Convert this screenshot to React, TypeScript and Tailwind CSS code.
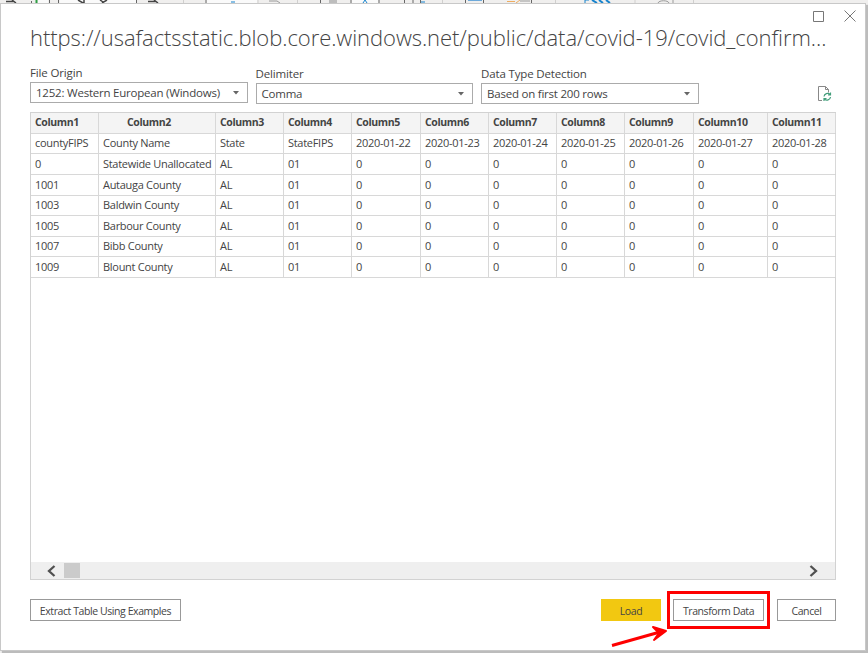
import React from "react";

const widths = ["w-[68px]", "w-[117px]", "w-[68px]", "w-[68px]", "w-[69px]", "w-[68px]", "w-[68px]", "w-[68px]", "w-[69px]", "w-[74px]", "w-[68px]"];
const headers = Array.from({ length: 11 }, (_, i) => `Column${i + 1}`);
const dates = ["2020-01-22", "2020-01-23", "2020-01-24", "2020-01-25", "2020-01-26", "2020-01-27", "2020-01-28"];
const zeros = ["0", "0", "0", "0", "0", "0", "0"];
const counties = [
  ["0", "Statewide Unallocated"],
  ["1001", "Autauga County"],
  ["1003", "Baldwin County"],
  ["1005", "Barbour County"],
  ["1007", "Bibb County"],
  ["1009", "Blount County"],
];
const rows = [
  ["countyFIPS", "County Name", "State", "StateFIPS", ...dates],
  ...counties.map((c) => [...c, "AL", "01", ...zeros]),
];
const heights = [
  "h-5 leading-[18px]",
  "h-[21px] leading-[20px]",
  "h-[21px] leading-[19px]",
  "h-5 leading-[18px]",
  "h-[21px] leading-[19px]",
  "h-5 leading-[18px]",
  "h-[21px] leading-[20px]",
];

function Select({ label, value, first }: { label: string; value: string; first?: boolean }) {
  return (
    <div className={first ? "w-[217.500px]" : "w-[217.500px] pt-px"}>
      <div className="-mt-px h-[17px] whitespace-nowrap text-[11.500px] leading-[18px] tracking-[-0.15px]">{label}</div>
      <div className="mt-px flex h-[21px] items-center justify-between border border-[#ababab] pl-[5px] pr-[8px] text-[11.500px] tracking-[-0.22px]">
        <span className="whitespace-nowrap">{value}</span>
        <svg className="shrink-0" width="6" height="4" viewBox="0 0 6 4"><path d="M0 0h6L3 3.5z" fill="#666" /></svg>
      </div>
    </div>
  );
}

function ToolbarEdge() {
  return (
    <svg className="block shrink-0" width="868" height="3" viewBox="0 0 868 3" fill="none">
      <path d="M38 0h10v3h-10zM60 0h76v3H60zM207 0h50v3h-50zM352 0h26v3h-26z" fill="#fafafa" />
      <path d="M6 1.500h8M12 0l4 3M148 1.500h8M154 0l4 3M78 0l5 3M84 0v3M107 0l-5 3M100 0l3 2" stroke="#444" strokeWidth="1.500" />
      <path d="M31.500 1v2M49.500 0v3M58.500 0v3M136.500 0v3M206 0v3M320.500 0v3M336.500 0v3M351 0v3M379 0v3M404.500 0v3M413 0v3M420.500 0v3M465.500 0v3M483.500 0v3M531.500 0v3" stroke="#666" />
      <path d="M329 0h8v3h-8z" fill="#bdbdbd" />
      <path d="M36.500 0v3" stroke="#2f9e44" strokeWidth="2" />
      <path d="M183.500 0v3M258 0v3M297.500 0v3M442.500 0v3M555.500 0v3M635 0v3M693.500 0v3" stroke="#d0cfce" />
      <path d="M269 1h8l3 2M520 1h10M658 3c1-3 10-3 11 0M673 0v3" stroke="#9a9a9a" />
      <path d="M363 3l2-3 2 3M231 2h4M421 2h4M585 3V0h4" stroke="#1683cd" />
      <path d="M592 0l5 3M599 0l4 3M606 0l4 3" stroke="#1683cd" strokeWidth="2" />
      <path d="M468 .5h14" stroke="#6da9da" />
      <path d="M507 1.500h8M520 0l-4 3" stroke="#efad61" />
    </svg>
  );
}

export default function App() {
  return (
    <div className="flex h-[653px] w-[868px] flex-col overflow-hidden bg-[#f0efee] font-['Open_Sans','Noto_Sans',sans-serif] text-[#444]">
      <ToolbarEdge />
      <div className="relative flex h-[648px] w-[866px] shrink-0 flex-col border border-[#c8c8c8] bg-white pl-[29px] shadow-[2px_2px_1px_#bcbcbc]">
        <div className="flex h-[18px] items-end justify-end gap-[19px] pr-[9px]">
          <svg width="12" height="12" viewBox="0 0 12 12" fill="none" stroke="#777"><path d="M.5 1.5h10v10H.5z" /></svg>
          <svg width="12" height="12" viewBox="0 0 12 12" fill="none" stroke="#777"><path d="M.5.5l11 11M11.5.5l-11 11" /></svg>
        </div>
        <h1 className="h-[43px] whitespace-nowrap text-[22px] font-light leading-[30px] tracking-[-0.06px]">https://usafactsstatic.blob.core.windows.net/public/data/covid-19/covid_confirm...</h1>
        <div className="flex h-[47px] gap-2">
          <Select first label="File Origin" value="1252: Western European (Windows)" />
          <Select label="Delimiter" value="Comma" />
          <Select label="Data Type Detection" value="Based on first 200 rows" />
          <svg className="ml-[110px] mt-[20px]" width="15" height="17" viewBox="0 0 15 17" fill="none">
            <path d="M5 15.500H1.500V1.500h7l3 3v3M8.500 1.500v3h3" stroke="#888" />
            <path d="M7 11.500a3.500 3.500 0 0 1 6-2M13.500 7.500v2.500H11M13.500 12a3.500 3.500 0 0 1-6 2M7 16v-2.500h2.500" stroke="#439e7b" strokeWidth="1.200" />
          </svg>
        </div>
        <div className="flex h-[468px] w-[806px] flex-col border border-[#d2d2d2]">
          <div className="flex h-[21px] shrink-0 border-b border-[#d8d8d8] bg-[#f4f4f4] text-[10.500px] font-bold leading-[19px] tracking-[-0.36px]">
            {headers.map((h, i) => (
              <div key={h} className={`${widths[i]} shrink-0 border-r border-[#d8d8d8] ${i === 1 ? "pl-7" : "pl-1"}`}>{h}</div>
            ))}
          </div>
          {rows.map((r, n) => (
            <div key={n} className={`${heights[n]} flex shrink-0 border-b border-[#d8d8d8] text-[11px] tracking-[-0.29px]`}>
              {r.map((v, i) => (
                <div key={i} className={`${widths[i]} shrink-0 whitespace-nowrap border-r border-[#d8d8d8] pl-1`}>{v}</div>
              ))}
            </div>
          ))}
          <div className="mt-auto flex h-[17px] items-center bg-[#efefef]">
            <svg className="ml-[15px]" width="10" height="12" viewBox="0 0 10 12" fill="none"><path d="M8.500 1L3 6l5.500 5" stroke="#505050" strokeWidth="2.300" /></svg>
            <div className="ml-2 h-[15px] w-4 bg-[#cbcbcb]" />
            <svg className="ml-auto mr-4" width="10" height="12" viewBox="0 0 10 12" fill="none"><path d="M1.500 1L7 6l-5.500 5" stroke="#505050" strokeWidth="2.300" /></svg>
          </div>
        </div>
        <div className="mt-[19px] flex h-[22px] w-[806px] whitespace-nowrap text-[10.500px] leading-[18px] tracking-[-0.42px] [word-spacing:0.5px]">
          <button className="w-[151px] border border-[#999] pt-px">Extract Table Using Examples</button>
          <button className="ml-auto w-[60px] bg-[#f2c811] pt-px">Load</button>
          <div className="relative ml-[12px] w-[91px]">
            <button className="h-full w-full border border-[#999] pt-px">Transform Data</button>
            <div className="absolute -left-[6px] -top-[8px] h-[38px] w-[103px] border-[3px] border-[#fe0000]" />
            <svg className="absolute -left-[63px] top-[24px]" width="60" height="26" viewBox="0 0 60 26" fill="none" stroke="#fe0000" strokeWidth="3" strokeLinejoin="round"><path d="M2 22.500L50 9" /><path d="M43 4l13 4-12 9 5-7z" fill="#fe0000" strokeWidth="2" /></svg>
          </div>
          <button className="ml-[13px] w-[59px] border border-[#999] pt-px">Cancel</button>
        </div>
      </div>
    </div>
  );
}
